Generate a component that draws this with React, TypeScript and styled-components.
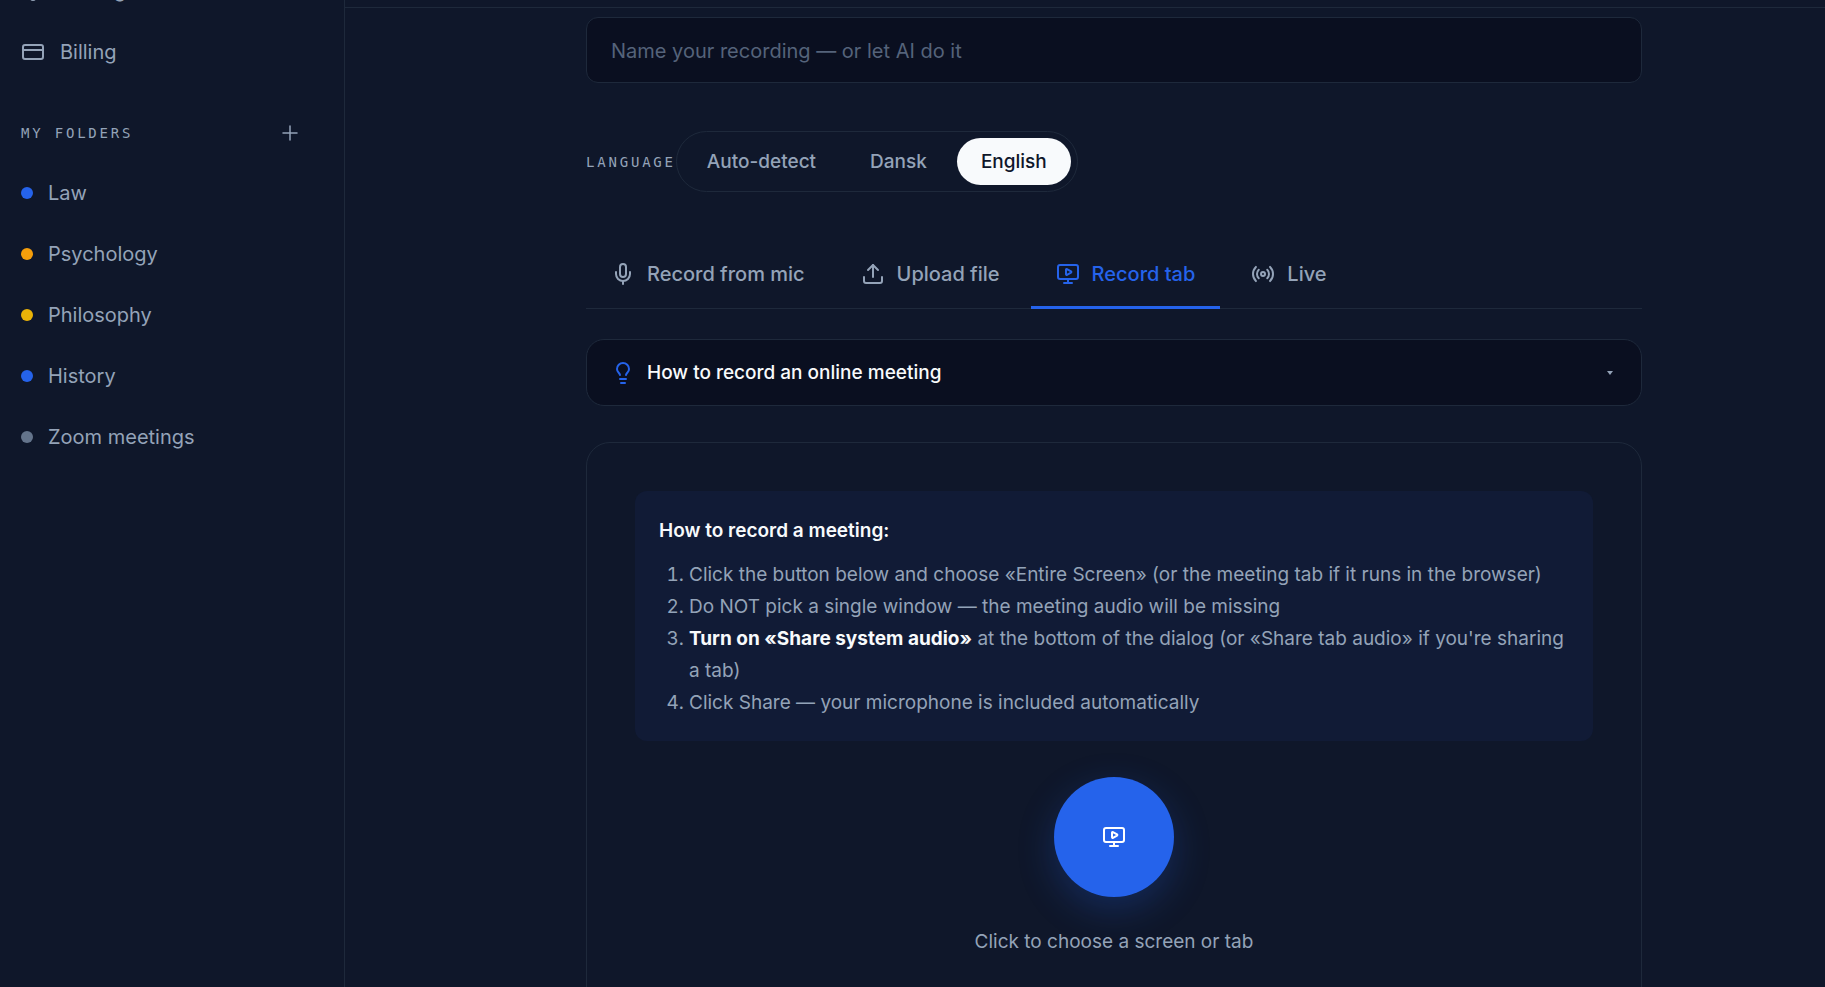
import React from "react";
import styled, { createGlobalStyle, css } from "styled-components";
import { CreditCard, Lightbulb, Mic, MonitorPlay, Plus, Radio, Settings, Upload } from "lucide-react";

const color = {
  page: "#0f172a",
  inset: "#0a0f20",
  line: "#1e293b",
  muted: "#94a3b8",
  bright: "#f8fafc",
  accent: "#2563eb",
};

const GlobalStyle = createGlobalStyle`
  *, *::before, *::after { box-sizing: border-box; }
  html, body { margin: 0; background: ${color.page}; }
  body { font-family: Inter, "Liberation Sans", sans-serif; color: ${color.muted}; }
  button, input { font: inherit; color: inherit; }
  button { border: 0; background: none; padding: 0; cursor: pointer; }
`;

const Shell = styled.div`
  display: grid;
  grid-template-columns: 345px minmax(0, 1fr);
  height: 100vh;
  overflow: hidden;
`;

const Sidebar = styled.aside`
  border-right: 1px solid ${color.line};
  padding: 0 21px;
  overflow: hidden;
  display: flex;
  flex-direction: column;
`;

const NavList = styled.nav`
  display: flex;
  flex-direction: column;
  gap: 1px;
  margin-top: -41px;
`;

const NavLink = styled.a`
  display: flex;
  align-items: center;
  gap: 15px;
  height: 61px;
  color: inherit;
  text-decoration: none;
  font-size: 20px;
  line-height: 30px;
`;

const FolderHeading = styled.div`
  display: flex;
  align-items: center;
  justify-content: space-between;
  height: 36px;
  margin-top: 33px;
`;

const Caption = styled.span`
  font-family: "DejaVu Sans Mono", monospace;
  font-size: 14px;
  line-height: 20px;
  letter-spacing: 0.2em;
  text-transform: uppercase;
  font-weight: 400;
`;

const AddButton = styled.button`
  display: grid;
  place-items: center;
  width: 66px;
  height: 36px;
`;

const FolderList = styled.ul`
  list-style: none;
  margin: 11px 0 0;
  padding: 0;
`;

const Dot = styled.span<{ $fill: string }>`
  width: 12px;
  height: 12px;
  border-radius: 50%;
  background: ${(p) => p.$fill};
`;

const Main = styled.main`
  display: flex;
  flex-direction: column;
  min-width: 0;
  overflow: hidden;
`;

const TopBar = styled.header`
  flex: none;
  height: 8px;
  border-bottom: 1px solid ${color.line};
`;

const Scroller = styled.div`
  flex: 1;
  min-height: 0;
  overflow: hidden;
  padding: 9px 0 0 58px;
`;

const Column = styled.div`
  max-width: 1056px;
  margin: 0 auto;
  display: flex;
  flex-direction: column;
`;

const NameInput = styled.input`
  width: 100%;
  height: 66px;
  padding: 2px 24px 0;
  border: 1px solid ${color.line};
  border-radius: 12px;
  background: ${color.inset};
  font-size: 20px;
  line-height: 30px;
  &::placeholder { color: #55637a; opacity: 1; }
`;

const LanguageRow = styled.div`
  display: flex;
  align-items: center;
  margin-top: 48px;
`;

const Segments = styled.div`
  display: flex;
  gap: 6px;
  padding: 6px;
  border: 1px solid ${color.line};
  border-radius: 31px;
`;

const Segment = styled.button<{ $active?: boolean }>`
  height: 47px;
  padding: 0 24px;
  border-radius: 24px;
  font-size: 19px;
  line-height: 28px;
  font-weight: 500;
  ${(p) => p.$active && css`
    background: ${color.bright};
    color: ${color.page};
  `}
`;

const Tabs = styled.div`
  display: flex;
  gap: 6px;
  margin-top: 48px;
  border-bottom: 1px solid ${color.line};
`;

const Tab = styled.button<{ $active?: boolean }>`
  display: flex;
  align-items: center;
  gap: 12px;
  height: 69px;
  margin-bottom: -1px;
  padding: 2px 25px 0;
  font-size: 20px;
  line-height: 30px;
  font-weight: 500;
  border-bottom: 3px solid transparent;
  ${(p) => p.$active && css`
    color: ${color.accent};
    border-bottom-color: ${color.accent};
  `}
`;

const Disclosure = styled.button`
  display: flex;
  align-items: center;
  gap: 12px;
  height: 67px;
  margin-top: 30px;
  padding: 0 24px;
  border: 1px solid ${color.line};
  border-radius: 18px;
  background: ${color.inset};
  color: ${color.bright};
  font-size: 19px;
  line-height: 28px;
  font-weight: 500;
  text-align: left;
`;

const DisclosureTitle = styled.span`
  flex: 1;
`;

const Caret = styled.span`
  border: 3px solid transparent;
  border-top: 4px solid ${color.muted};
  border-bottom: 0;
  margin-right: 4px;
`;

const Panel = styled.section`
  display: flex;
  flex-direction: column;
  align-items: center;
  margin-top: 36px;
  padding: 48px 48px 54px;
  border: 1px solid ${color.line};
  border-radius: 24px;
`;

const Steps = styled.div`
  width: 100%;
  padding: 24px 24px 22px;
  border-radius: 12px;
  background: #111b36;
  font-size: 19px;
  line-height: 32px;
`;

const StepsTitle = styled.h2`
  margin: 0 0 12px;
  color: ${color.bright};
  font-size: 19px;
  line-height: 32px;
  font-weight: 600;
`;

const StepList = styled.ol`
  margin: 0;
  padding-left: 30px;
  strong { color: ${color.bright}; font-weight: 700; }
`;

const RecordButton = styled.button`
  display: grid;
  place-items: center;
  width: 120px;
  height: 120px;
  margin-top: 36px;
  border-radius: 50%;
  background: ${color.accent};
  color: #fff;
  box-shadow: 0 12px 36px rgba(37, 99, 235, 0.25);
`;

const Hint = styled.p`
  margin: 30px 0 0;
  font-size: 19px;
  line-height: 30px;
`;

const folders = [
  { name: "Law", fill: "#2563eb" },
  { name: "Psychology", fill: "#f59e0b" },
  { name: "Philosophy", fill: "#eab308" },
  { name: "History", fill: "#2563eb" },
  { name: "Zoom meetings", fill: "#64748b" },
];

export default function App() {
  return (
    <>
      <GlobalStyle />
      <Shell>
        <Sidebar>
          <NavList aria-label="Account">
            <NavLink href="#settings"><Settings size={24} />Settings</NavLink>
            <NavLink href="#billing"><CreditCard size={24} />Billing</NavLink>
          </NavList>
          <FolderHeading>
            <Caption>My folders</Caption>
            <AddButton type="button" aria-label="Add folder"><Plus size={24} strokeWidth={1.5} /></AddButton>
          </FolderHeading>
          <FolderList>
            {folders.map((f) => (
              <li key={f.name}>
                <NavLink href={"#" + f.name}><Dot $fill={f.fill} />{f.name}</NavLink>
              </li>
            ))}
          </FolderList>
        </Sidebar>
        <Main>
          <TopBar />
          <Scroller>
            <Column>
              <NameInput type="text" aria-label="Recording name" placeholder="Name your recording — or let AI do it" />
              <LanguageRow>
                <Caption id="language">Language</Caption>
                <Segments role="group" aria-labelledby="language">
                  <Segment type="button">Auto-detect</Segment>
                  <Segment type="button">Dansk</Segment>
                  <Segment type="button" $active aria-pressed>English</Segment>
                </Segments>
              </LanguageRow>
              <Tabs role="tablist">
                <Tab type="button" role="tab"><Mic size={24} />Record from mic</Tab>
                <Tab type="button" role="tab"><Upload size={24} />Upload file</Tab>
                <Tab type="button" role="tab" $active aria-selected><MonitorPlay size={24} />Record tab</Tab>
                <Tab type="button" role="tab"><Radio size={24} />Live</Tab>
              </Tabs>
              <Disclosure type="button" aria-expanded={false}>
                <Lightbulb size={24} color={color.accent} />
                <DisclosureTitle>How to record an online meeting</DisclosureTitle>
                <Caret />
              </Disclosure>
              <Panel>
                <Steps>
                  <StepsTitle>How to record a meeting:</StepsTitle>
                  <StepList>
                    <li>Click the button below and choose «Entire Screen» (or the meeting tab if it runs in the browser)</li>
                    <li>Do NOT pick a single window — the meeting audio will be missing</li>
                    <li><strong>Turn on «Share system audio»</strong> at the bottom of the dialog (or «Share tab audio» if you're sharing a tab)</li>
                    <li>Click Share — your microphone is included automatically</li>
                  </StepList>
                </Steps>
                <RecordButton type="button" aria-label="Choose a screen or tab"><MonitorPlay size={24} /></RecordButton>
                <Hint>Click to choose a screen or tab</Hint>
              </Panel>
            </Column>
          </Scroller>
        </Main>
      </Shell>
    </>
  );
}
